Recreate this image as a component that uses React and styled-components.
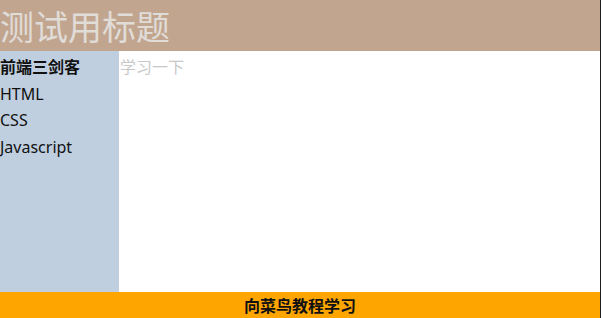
import React from 'react';
import styled, { createGlobalStyle } from 'styled-components';

const GlobalStyle = createGlobalStyle`
  html, body {
    margin: 0;
    padding: 0;
    background: #1e1e1e;
  }
  body {
    font-family: 'Noto Sans', 'Noto Sans CJK SC', sans-serif;
  }
`;

const Page = styled.div`
  width: 600px;
  height: 318px;
  display: flex;
  flex-direction: column;
  background: #ffffff;
`;

const Header = styled.header`
  height: 51px;
  background: #c2a58e;
  display: flex;
  align-items: center;
  flex-shrink: 0;
`;

const Title = styled.h1`
  margin: 0;
  font-size: 34px;
  font-weight: normal;
  color: #e0dcd8;
  line-height: 1;
  font-family: 'Noto Sans CJK SC', sans-serif;
`;

const Main = styled.div`
  flex: 1;
  display: flex;
`;

const Menu = styled.nav`
  width: 119px;
  background: #c0cfdf;
  padding-top: 3px;
  box-sizing: border-box;
`;

const MenuItem = styled.div`
  font-size: 16px;
  line-height: 26.5px;
  color: #111;
  font-weight: ${({ bold }) => (bold ? 'bold' : 'normal')};
`;

const Content = styled.div`
  flex: 1;
  padding-top: 3px;
  padding-left: 1px;
  font-size: 16px;
  line-height: 26.5px;
  color: #c8c8c8;
`;

const Footer = styled.footer`
  height: 26px;
  background: #ffa500;
  display: flex;
  align-items: center;
  justify-content: center;
  font-size: 16px;
  font-weight: bold;
  color: #111;
  flex-shrink: 0;
`;

const App = () => (
  <>
    <GlobalStyle />
    <Page>
      <Header>
        <Title>测试用标题</Title>
      </Header>
      <Main>
        <Menu>
          <MenuItem bold>前端三剑客</MenuItem>
          <MenuItem>HTML</MenuItem>
          <MenuItem>CSS</MenuItem>
          <MenuItem>Javascript</MenuItem>
        </Menu>
        <Content>学习一下</Content>
      </Main>
      <Footer>向菜鸟教程学习</Footer>
    </Page>
  </>
);

export default App;
